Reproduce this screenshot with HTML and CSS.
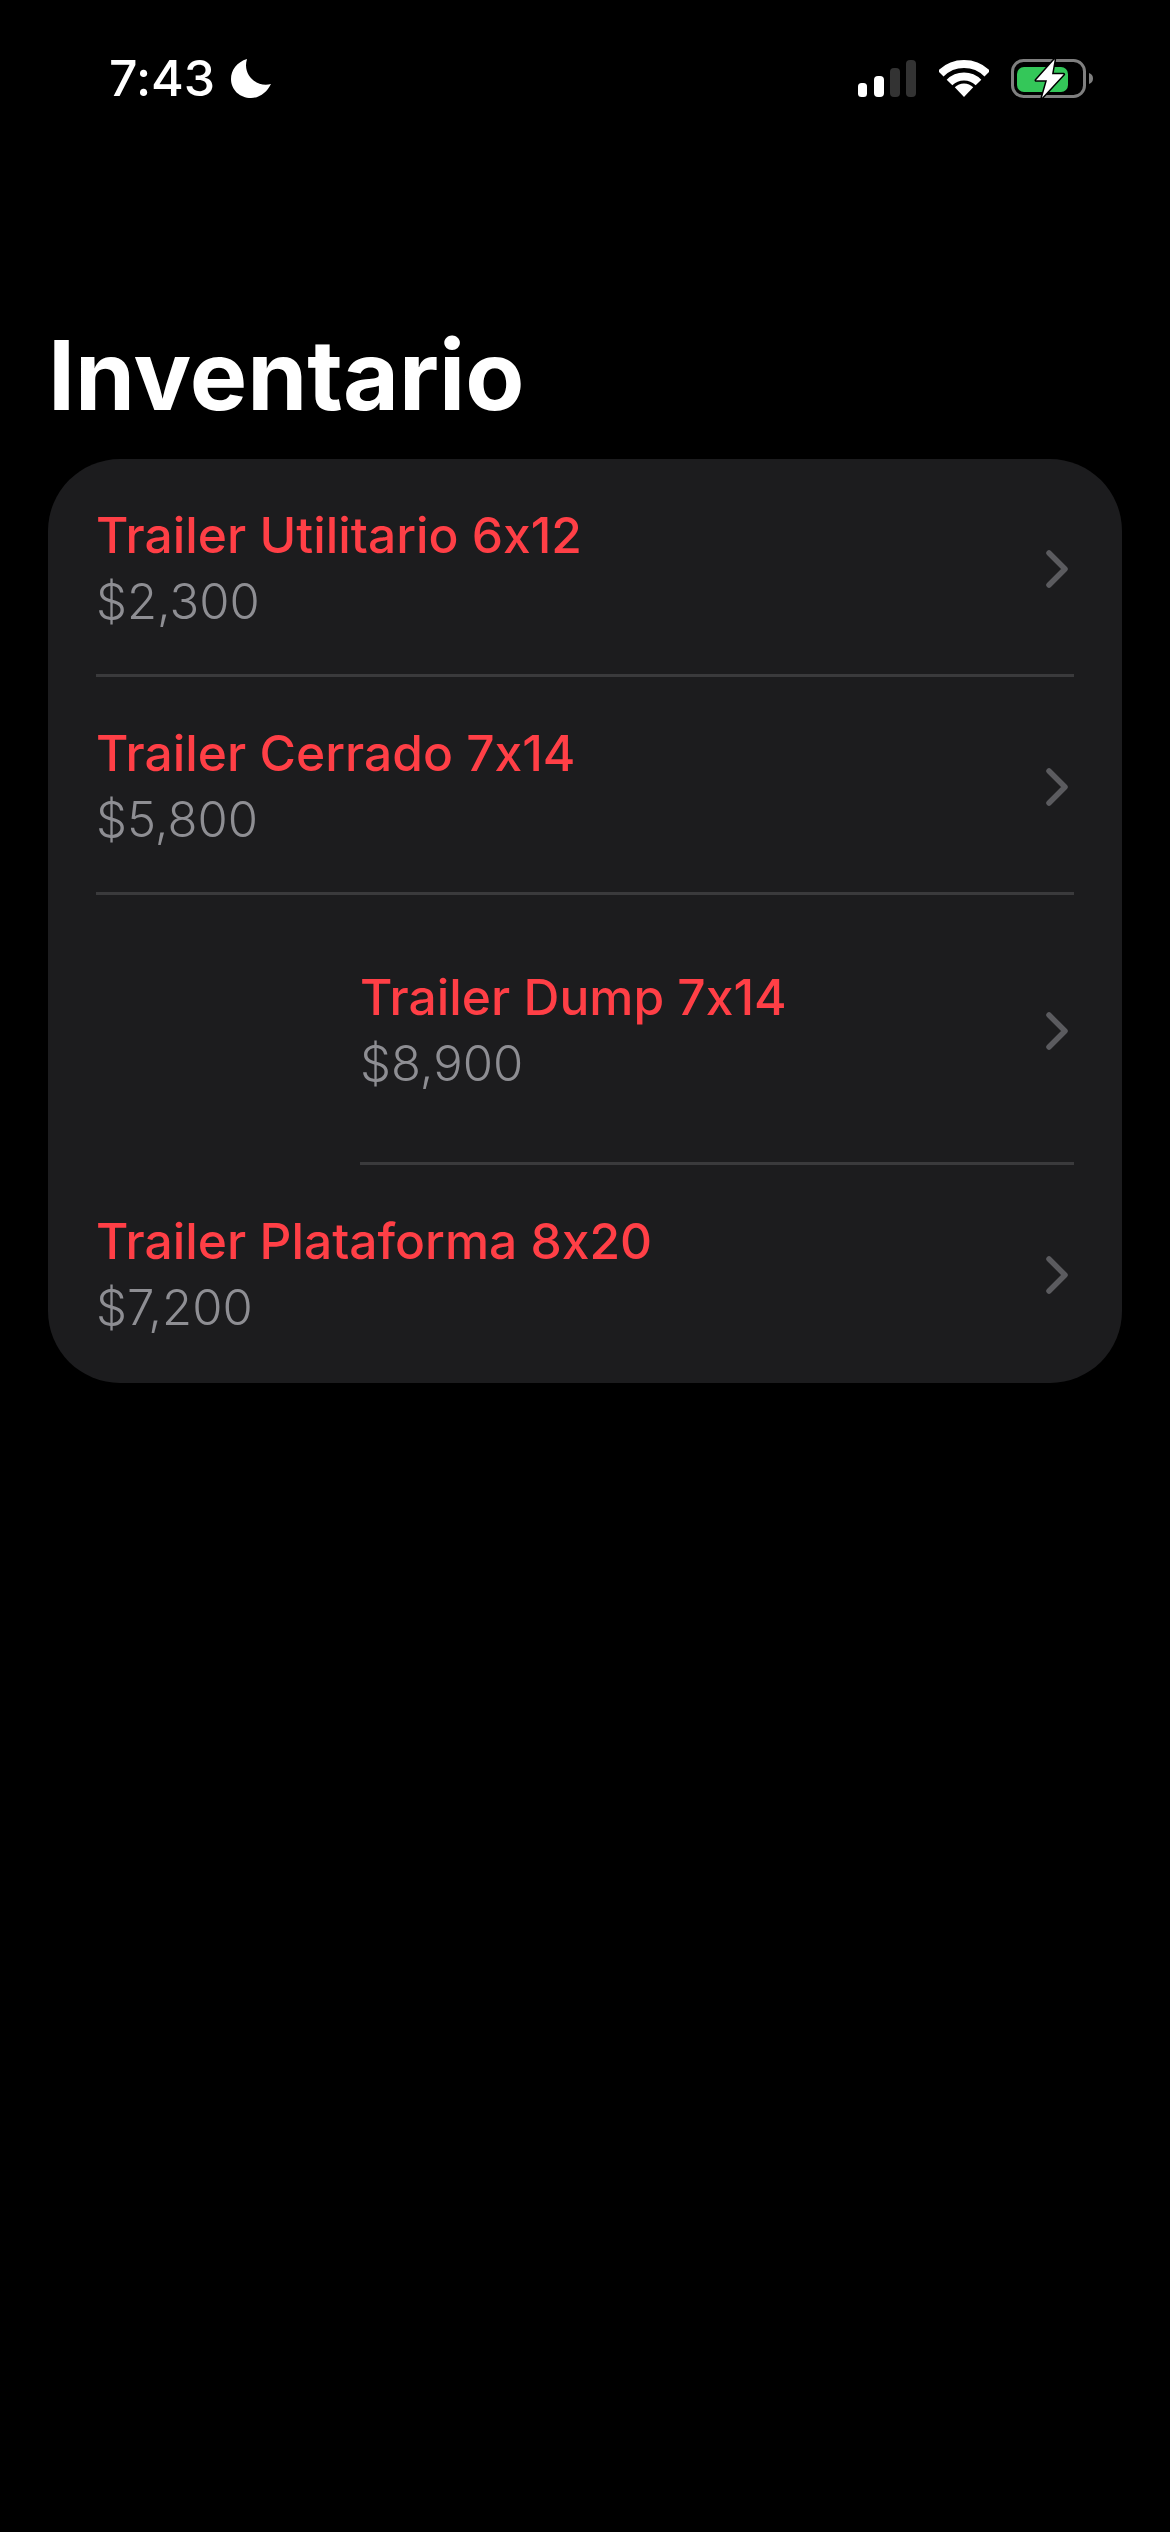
FILE: index.html
```html
<!DOCTYPE html>
<html lang="es">
<head>
<meta charset="utf-8">
<title>Inventario</title>
<link rel="stylesheet" href="styles.css">
</head>
<body>
<header class="status">
  <div class="status-left">
    <span class="time">7:43</span>
    <svg class="moon" viewBox="0 0 40 40"><path d="M16 1C6 4 0 12 0 21C0 32 9 40 20 40C29 40 36 34 40 26C26 30 11 17 16 1Z" fill="#fff"/></svg>
  </div>
  <div class="status-right">
    <svg class="signal" viewBox="0 0 58 37"><rect x="0" y="23" width="9" height="14" rx="3.5" fill="#fff"/><rect x="16" y="16" width="10" height="21" rx="4" fill="#fff"/><rect x="32" y="8" width="10" height="29" rx="4" fill="#333"/><rect x="48" y="0" width="10" height="37" rx="4" fill="#333"/></svg>
    <svg class="wifi" viewBox="0 0 50 38"><g fill="none" stroke="#fff" stroke-width="8"><path d="M1.7 14.7A33 33 0 0 1 48.3 14.7"/><path d="M10.5 23.5A20.5 20.5 0 0 1 39.5 23.5"/></g><path d="M15.8 28.2A13 13 0 0 1 34.2 28.2L25 38Z" fill="#fff"/></svg>
    <svg class="battery" viewBox="1005 54 90 46"><rect x="1010.5" y="59.5" width="72" height="36" rx="11" fill="none" stroke="#7f7f7f" stroke-width="3"/><rect x="1015" y="66" width="51" height="25" rx="7" fill="#34c759"/><path d="M1087 72C1090 73 1091 75 1091 77.500C1091 80 1090 82 1087 83Z" fill="#7f7f7f"/><path d="M1052.700 58.300L1034 79.300H1045L1040 96.700L1061.700 73.300H1050Z" fill="#fff" stroke="#000" stroke-width="3" stroke-linejoin="round" paint-order="stroke"/></svg>
  </div>
</header>
<main class="screen">
  <h1 class="title">Inventario</h1>
  <ul class="card">
    <li class="row">
      <div class="row-body">
        <div class="row-text"><div class="name">Trailer Utilitario 6x12</div><div class="price">$2,300</div></div>
        <svg class="chev" viewBox="0 0 22 38"><path d="M3 3L19 19L3 35" fill="none" stroke="#5b5b5f" stroke-width="5.500" stroke-linecap="round" stroke-linejoin="round"/></svg>
      </div>
    </li>
    <li class="row">
      <div class="row-body">
        <div class="row-text"><div class="name">Trailer Cerrado 7x14</div><div class="price">$5,800</div></div>
        <svg class="chev" viewBox="0 0 22 38"><path d="M3 3L19 19L3 35" fill="none" stroke="#5b5b5f" stroke-width="5.500" stroke-linecap="round" stroke-linejoin="round"/></svg>
      </div>
    </li>
    <li class="row row-indent">
      <div class="row-body">
        <div class="row-text"><div class="name">Trailer Dump 7x14</div><div class="price">$8,900</div></div>
        <svg class="chev" viewBox="0 0 22 38"><path d="M3 3L19 19L3 35" fill="none" stroke="#5b5b5f" stroke-width="5.500" stroke-linecap="round" stroke-linejoin="round"/></svg>
      </div>
    </li>
    <li class="row">
      <div class="row-body">
        <div class="row-text"><div class="name">Trailer Plataforma 8x20</div><div class="price">$7,200</div></div>
        <svg class="chev" viewBox="0 0 22 38"><path d="M3 3L19 19L3 35" fill="none" stroke="#5b5b5f" stroke-width="5.500" stroke-linecap="round" stroke-linejoin="round"/></svg>
      </div>
    </li>
  </ul>
</main>
</body>
</html>
```
FILE: styles.css
```css
* { box-sizing: border-box; }
html, body { margin: 0; padding: 0; background: #000; }
body { width: 1170px; height: 2532px; overflow: hidden; font-family: Inter, "Liberation Sans", sans-serif; color: #fff; font-feature-settings: "calt" 0; }

.status { display: flex; justify-content: space-between; align-items: center; height: 156px; padding: 0 74px 0 109px; }
.status-left { display: flex; align-items: center; gap: 16px; }
.time { font-size: 50px; font-weight: 500; line-height: 60px; letter-spacing: 0; }
.moon { width: 40px; height: 40px; display: block; }
.status-right { display: flex; align-items: center; }
.signal { width: 58px; height: 37px; display: block; margin-right: 23px; }
.wifi { width: 50px; height: 38px; display: block; margin-right: 18px; }
.battery { width: 90px; height: 46px; display: block; margin-right: -1px; }

.screen { padding: 0 48px; }
.title { margin: 0; font-size: 96.5px; line-height: 120px; font-weight: 700; height: 303px; padding-top: 159px; }

.card { list-style: none; margin: 0; padding: 0; background: #1c1c1e; border-radius: 72px; }
.row { padding: 0 48px; }
.row-indent { padding-left: 312px; }
.row-body { display: flex; align-items: center; justify-content: space-between; padding: 43px 0 38px; border-bottom: 3px solid #3a3a3c; }
.row-indent .row-body { padding-top: 69px; padding-bottom: 64px; }
.row:last-child .row-body { border-bottom: 0; padding-bottom: 41px; }
.row-text { display: flex; flex-direction: column; }
.name { font-size: 49.7px; font-weight: 550; line-height: 66px; color: #ff3f46; }
.price { font-size: 49px; font-weight: 350; line-height: 68px; color: #8e8e93; }
.chev { width: 22px; height: 38px; display: block; margin-right: 6px; }
```
